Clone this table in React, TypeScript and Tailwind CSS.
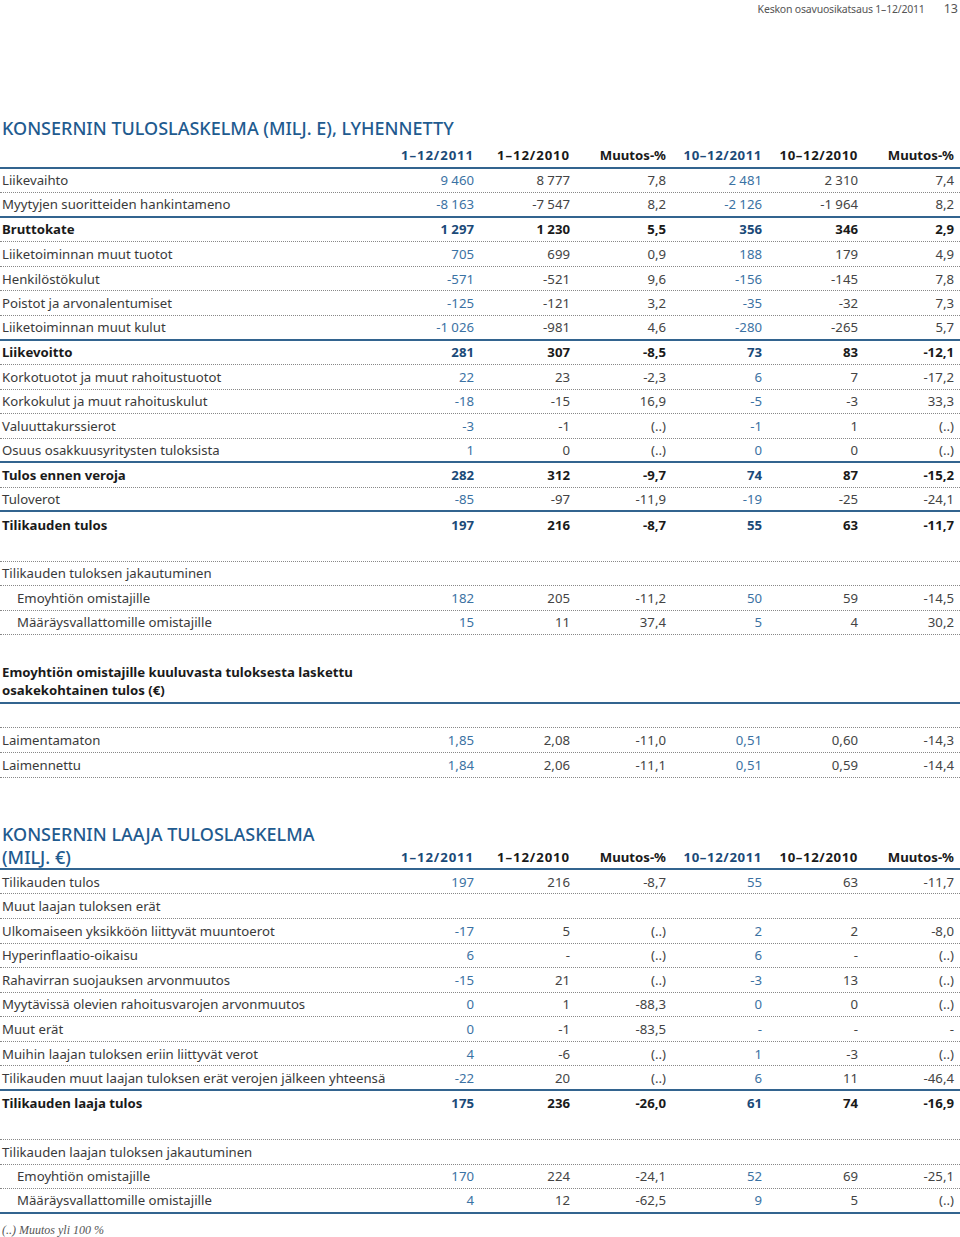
import React from "react";

type Line = "solid" | "dotted" | "none";
type Row = {
  label?: string;
  vals?: string[];
  bold?: boolean;
  indent?: boolean;
  line: Line;
};

const F = "\u00a0";

const t1: Row[] = [
  { label: "Liikevaihto", vals: [`9${F}460`, `8${F}777`, "7,8", `2${F}481`, `2${F}310`, "7,4"], line: "dotted" },
  { label: "Myytyjen suoritteiden hankintameno", vals: [`-8${F}163`, `-7${F}547`, "8,2", `-2${F}126`, `-1${F}964`, "8,2"], line: "solid" },
  { label: "Bruttokate", bold: true, vals: [`1${F}297`, `1${F}230`, "5,5", "356", "346", "2,9"], line: "dotted" },
  { label: "Liiketoiminnan muut tuotot", vals: ["705", "699", "0,9", "188", "179", "4,9"], line: "dotted" },
  { label: "Henkilöstökulut", vals: ["-571", "-521", "9,6", "-156", "-145", "7,8"], line: "dotted" },
  { label: "Poistot ja arvonalentumiset", vals: ["-125", "-121", "3,2", "-35", "-32", "7,3"], line: "dotted" },
  { label: "Liiketoiminnan muut kulut", vals: [`-1${F}026`, "-981", "4,6", "-280", "-265", "5,7"], line: "solid" },
  { label: "Liikevoitto", bold: true, vals: ["281", "307", "-8,5", "73", "83", "-12,1"], line: "dotted" },
  { label: "Korkotuotot ja muut rahoitustuotot", vals: ["22", "23", "-2,3", "6", "7", "-17,2"], line: "dotted" },
  { label: "Korkokulut ja muut rahoituskulut", vals: ["-18", "-15", "16,9", "-5", "-3", "33,3"], line: "dotted" },
  { label: "Valuuttakurssierot", vals: ["-3", "-1", "(..)", "-1", "1", "(..)"], line: "dotted" },
  { label: "Osuus osakkuusyritysten tuloksista", vals: ["1", "0", "(..)", "0", "0", "(..)"], line: "solid" },
  { label: "Tulos ennen veroja", bold: true, vals: ["282", "312", "-9,7", "74", "87", "-15,2"], line: "dotted" },
  { label: "Tuloverot", vals: ["-85", "-97", "-11,9", "-19", "-25", "-24,1"], line: "solid" },
  { label: "Tilikauden tulos", bold: true, vals: ["197", "216", "-8,7", "55", "63", "-11,7"], line: "none" },
  { line: "dotted" },
  { label: "Tilikauden tuloksen jakautuminen", line: "dotted" },
  { label: "Emoyhtiön omistajille", indent: true, vals: ["182", "205", "-11,2", "50", "59", "-14,5"], line: "dotted" },
  { label: "Määräysvallattomille omistajille", indent: true, vals: ["15", "11", "37,4", "5", "4", "30,2"], line: "dotted" },
];

const eps: Row[] = [
  { line: "dotted" },
  { label: "Laimentamaton", vals: ["1,85", "2,08", "-11,0", "0,51", "0,60", "-14,3"], line: "dotted" },
  { label: "Laimennettu", vals: ["1,84", "2,06", "-11,1", "0,51", "0,59", "-14,4"], line: "dotted" },
];

const t2: Row[] = [
  { label: "Tilikauden tulos", vals: ["197", "216", "-8,7", "55", "63", "-11,7"], line: "dotted" },
  { label: "Muut laajan tuloksen erät", line: "dotted" },
  { label: "Ulkomaiseen yksikköön liittyvät muuntoerot", vals: ["-17", "5", "(..)", "2", "2", "-8,0"], line: "dotted" },
  { label: "Hyperinflaatio-oikaisu", vals: ["6", "-", "(..)", "6", "-", "(..)"], line: "dotted" },
  { label: "Rahavirran suojauksen arvonmuutos", vals: ["-15", "21", "(..)", "-3", "13", "(..)"], line: "dotted" },
  { label: "Myytävissä olevien rahoitusvarojen arvonmuutos", vals: ["0", "1", "-88,3", "0", "0", "(..)"], line: "dotted" },
  { label: "Muut erät", vals: ["0", "-1", "-83,5", "-", "-", "-"], line: "dotted" },
  { label: "Muihin laajan tuloksen eriin liittyvät verot", vals: ["4", "-6", "(..)", "1", "-3", "(..)"], line: "dotted" },
  { label: "Tilikauden muut laajan tuloksen erät verojen jälkeen yhteensä", vals: ["-22", "20", "(..)", "6", "11", "-46,4"], line: "solid" },
  { label: "Tilikauden laaja tulos", bold: true, vals: ["175", "236", "-26,0", "61", "74", "-16,9"], line: "none" },
  { line: "dotted" },
  { label: "Tilikauden laajan tuloksen jakautuminen", line: "dotted" },
  { label: "Emoyhtiön omistajille", indent: true, vals: ["170", "224", "-24,1", "52", "69", "-25,1"], line: "dotted" },
  { label: "Määräysvallattomille omistajille", indent: true, vals: ["4", "12", "-62,5", "9", "5", "(..)"], line: "solid" },
];

const lineCls: Record<Line, string> = {
  solid: "border-b-2 border-solid border-[#33648f]",
  dotted: "border-b border-dotted border-[#888888]",
  none: "",
};

const grid = "grid grid-cols-[378px_96px_96px_96px_96px_96px_96px_6px] items-center";

function DataRow({ r }: { r: Row }) {
  return (
    <div className={`${grid} h-[24.57px] box-border ${lineCls[r.line]}`}>
      <div
        className={`whitespace-nowrap ${r.indent ? "pl-[17px]" : "pl-[2px]"} ${
          r.bold ? "font-bold text-[#1a1a1a]" : "text-[#3a3a3a]"
        }`}
      >
        {r.label ?? ""}
      </div>
      {(r.vals ?? ["", "", "", "", "", ""]).map((v, i) => {
        const blue = i === 0 || i === 3;
        let c = "";
        if (r.bold) c = blue ? "font-bold text-[#1b4a78]" : "font-bold text-[#1a1a1a]";
        else c = blue ? "text-[#3b72a3]" : "text-[#444444]";
        return (
          <div key={i} className={`text-right whitespace-nowrap ${c}`}>
            {v}
          </div>
        );
      })}
      <div />
    </div>
  );
}

function HeaderCells() {
  return (
    <>
      <div className="text-right font-bold text-[#1b4a78] tracking-[0.9px]">1–12/2011</div>
      <div className="text-right font-bold text-[#1a1a1a] tracking-[0.9px]">1–12/2010</div>
      <div className="text-right font-bold text-[#1a1a1a]">Muutos-%</div>
      <div className="text-right font-bold text-[#1b4a78] tracking-[0.6px]">10–12/2011</div>
      <div className="text-right font-bold text-[#1a1a1a] tracking-[0.6px]">10–12/2010</div>
      <div className="text-right font-bold text-[#1a1a1a]">Muutos-%</div>
      <div />
    </>
  );
}

export default function App() {
  return (
    <div
      className="w-[960px] bg-white text-[13.2px] leading-[18px] text-[#3a3a3a]"
      style={{ fontFamily: '"Noto Sans", "Open Sans", sans-serif' }}
    >
      <div className="flex h-[17px] items-center justify-end pr-[2px] text-[10.5px] text-[#555]">
        <span className="tracking-[-0.2px]">Keskon osavuosikatsaus 1–12/2011</span>
        <span className="ml-[19px] text-[12.5px]">13</span>
      </div>

      <div className="mt-[99px] h-[28px] pl-[2px] text-[18px] font-medium leading-[24px] text-[#1f5b8f]">
        KONSERNIN TULOSLASKELMA (MILJ. E), LYHENNETTY
      </div>

      <div className={`${grid} h-[24.57px] box-border ${lineCls.solid}`}>
        <div />
        <HeaderCells />
      </div>
      {t1.map((r, i) => (
        <DataRow key={i} r={r} />
      ))}

      <div className="mt-[27.6px] box-border border-b-2 border-solid border-[#33648f] pb-[3px] pl-[2px] font-bold leading-[18px] text-[#1a1a1a]">
        Emoyhtiön omistajille kuuluvasta tuloksesta laskettu
        <br />
        osakekohtainen tulos (€)
      </div>
      {eps.map((r, i) => (
        <DataRow key={i} r={r} />
      ))}

      <div className="mt-[45.8px] flex h-[22px] items-center pl-[2px] text-[18px] font-medium leading-[22px] text-[#1f5b8f]">
        KONSERNIN LAAJA TULOSLASKELMA
      </div>
      <div className={`${grid} h-[24.57px] box-border ${lineCls.solid}`}>
        <div className="pl-[2px] text-[18px] font-medium leading-[22px] text-[#1f5b8f]">(MILJ. €)</div>
        <HeaderCells />
      </div>
      {t2.map((r, i) => (
        <DataRow key={i} r={r} />
      ))}

      <div
        className="mt-[8px] pb-[10px] pl-[2px] text-[12px] italic leading-[16px] text-[#555]"
        style={{ fontFamily: '"Liberation Serif", serif' }}
      >
        (..) Muutos yli 100 %
      </div>
    </div>
  );
}
